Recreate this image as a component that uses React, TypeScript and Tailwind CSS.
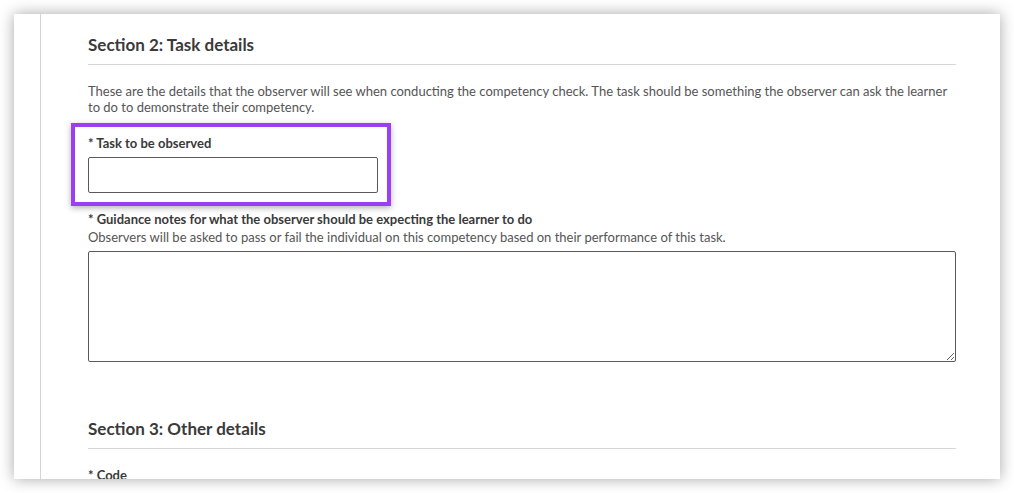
export default function App() {
  return (
    <div className="w-[1014px] h-[493px] bg-white pt-[14px] pl-[14px] overflow-hidden" style={{ fontFamily: "Lato, 'Open Sans', sans-serif" }}>
      <div className="w-[986px] h-[465px] bg-white shadow-[0_0_14px_rgba(0,0,0,0.35)] flex overflow-hidden">
        {/* left rail */}
        <div className="w-[27px] shrink-0 border-r border-[#d4d4d4]" />

        <div className="pl-[47px] w-[915px] text-[#3f3f3f]">
          {/* SECTION 2 */}
          <h2 className="mt-[19px] text-[17px] leading-[24px] font-bold text-[#3a3a3a] pb-[7px] border-b border-[#d6d6d6]">
            Section 2: Task details
          </h2>

          <p className="mt-[18px] text-[13px] leading-[16px] text-[#555]">
            These are the details that the observer will see when conducting the competency check. The task should be something the observer can ask the learner to do to demonstrate their competency.
          </p>

          <div className="mt-[8px] -ml-[17px] w-[320px] border-4 border-[#9b3ff2] shadow-[0_2px_6px_rgba(0,0,0,0.3)] pl-[13px] pt-[8px] pb-[9px]">
            <label className="block text-[13px] leading-[16px] font-bold text-[#3a3a3a]">
              * Task to be observed
            </label>
            <input className="mt-[6px] block w-[290px] h-[36px] border border-[#5a5a5a] rounded-[2px] bg-white" />
          </div>

          <label className="block mt-[4px] text-[13px] leading-[18px] font-bold text-[#3a3a3a]">
            * Guidance notes for what the observer should be expecting the learner to do
          </label>
          <p className="text-[13px] leading-[18px] text-[#555]">
            Observers will be asked to pass or fail the individual on this competency based on their performance of this task.
          </p>
          <textarea className="mt-[5px] block w-[868px] h-[111px] border border-[#5a5a5a] rounded-[2px] bg-white" />

          {/* SECTION 3 */}
          <h2 className="mt-[55px] text-[17px] leading-[24px] font-bold text-[#3a3a3a] pb-[7px] border-b border-[#d6d6d6]">
            Section 3: Other details
          </h2>

          <label className="block mt-[17px] text-[13px] leading-[18px] font-bold text-[#3a3a3a]">
            * Code
          </label>
        </div>
      </div>
    </div>
  );
}
